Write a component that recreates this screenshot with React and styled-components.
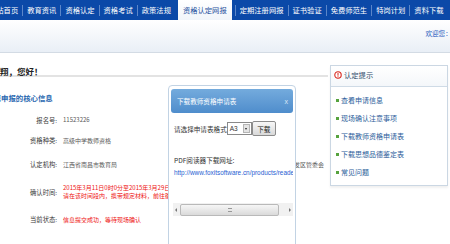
import styled, { createGlobalStyle } from "styled-components";

const GlobalStyle = createGlobalStyle`
  html, body {
    margin: 0;
    padding: 0;
    overflow: hidden;
    background: #fff;
  }
  body {
    font-family: "Noto Sans CJK SC", "Liberation Sans", sans-serif;
  }
`;

const navItems = [
  "网站首页",
  "教育资讯",
  "资格认定",
  "资格考试",
  "政策法规",
  "资格认定网报",
  "定期注册网报",
  "证书验证",
  "免费师范生",
  "特岗计划",
  "资料下载",
];

const tips = [
  "查看申请信息",
  "现场确认注意事项",
  "下载教师资格申请表",
  "下载思想品德鉴定表",
  "常见问题",
];

function App() {
  return (
    <>
      <GlobalStyle />
      <Page>
        <Nav>
          {navItems.map((item) => (
            <NavItem key={item} $active={item === "资格认定网报"}>
              {item}
            </NavItem>
          ))}
        </Nav>
        <Band>
          <Welcome>欢迎您：李翔</Welcome>
        </Band>
        <Main>
          <LeftColumn>
            <Greeting>李翔，您好！</Greeting>
            <SectionTitle>您申报的核心信息</SectionTitle>
            <InfoList>
              <InfoRow $h={20}>
                <Label>报名号:</Label>
                <Value>11523226</Value>
              </InfoRow>
              <InfoRow $h={21}>
                <Label>资格种类:</Label>
                <Value>高级中学教师资格</Value>
              </InfoRow>
              <InfoRow $h={27}>
                <Label>认定机构:</Label>
                <Value>江西省南昌市教育局</Value>
                <Extra>确认点: 南昌高新开发区管委会</Extra>
              </InfoRow>
              <InfoRow $h={28}>
                <Label>确认时间:</Label>
                <Value $red>
                  <Line>2015年3月11日0时0分至2015年3月29日24时0分</Line>
                  <Line>请在该时间段内，携带规定材料，前往确认点</Line>
                </Value>
              </InfoRow>
              <InfoRow $h={27}>
                <Label>当前状态:</Label>
                <Value $red>信息提交成功，等待现场确认</Value>
              </InfoRow>
            </InfoList>
          </LeftColumn>
          <Sidebar>
            <SidebarHeader>
              <svg width="8" height="8" viewBox="0 0 8 8">
                <circle cx="4" cy="4" r="3.2" fill="#fff" stroke="#d9261c" strokeWidth="1.1" />
                <rect x="3.5" y="1.9" width="1" height="2.8" fill="#d9261c" />
                <rect x="3.5" y="5.3" width="1" height="0.9" fill="#d9261c" />
              </svg>
              认定提示
            </SidebarHeader>
            <TipList>
              {tips.map((t) => (
                <Tip key={t}>
                  <Bullet />
                  {t}
                </Tip>
              ))}
            </TipList>
          </Sidebar>
        </Main>

        <Dialog>
          <TitleBar>
            <span>下载教师资格申请表</span>
            <Close>x</Close>
          </TitleBar>
          <DialogBody>
            <FormRow>
              <span>请选择申请表格式</span>
              <Select>
                <span>A3</span>
                <SelectArrow />
              </Select>
              <Button>下载</Button>
            </FormRow>
            <PdfLabel>PDF阅读器下载网址:</PdfLabel>
            <Link>http://www.foxitsoftware.cn/products/reader/</Link>
            <ScrollBar>
              <ArrowLeft />
              <Thumb>
                <Grip />
              </Thumb>
              <ArrowRight />
            </ScrollBar>
          </DialogBody>
        </Dialog>
      </Page>
    </>
  );
}

export default App;

const Page = styled.div`
  position: relative;
  width: 465px;
  height: 244px;
  margin-left: -15px;
  overflow: hidden;
`;

const Nav = styled.div`
  display: flex;
  align-items: center;
  height: 20px;
  background: #0b49a8;
  font-size: 7.3px;
  color: #fff;
  white-space: nowrap;
`;

const NavItem = styled.div`
  line-height: 11px;
  padding: 0 4px;
  border-left: 1px solid #5b86c9;

  &:first-child {
    border-left: none;
  }

  ${(p) =>
    p.$active &&
    `
    align-self: flex-end;
    height: 20px;
    line-height: 20px;
    margin: 0 3px 0 3px;
    padding: 0 5px;
    border-left: none;
    background: linear-gradient(#ffffff, #f1f5fa);
    color: #1d4f9c;
    & + div { border-left: 1px solid #5b86c9; }
  `}
`;

const Band = styled.div`
  display: flex;
  justify-content: flex-end;
  height: 33px;
  padding-top: 8px;
  box-sizing: border-box;
  background: linear-gradient(#ffffff, #e9eff6);
  border-bottom: 1px solid #d3dbe4;
`;

const Welcome = styled.div`
  margin-right: -15px;
  line-height: 10px;
  font-size: 6.6px;
  color: #2f62c0;
  white-space: nowrap;
`;

const Main = styled.div`
  display: flex;
  align-items: flex-start;
`;

const LeftColumn = styled.div`
  flex: 1;
  min-width: 0;
`;

const Greeting = styled.div`
  height: 24px;
  padding: 12px 0 0 6.5px;
  box-sizing: border-box;
  line-height: 12px;
  font-size: 8.5px;
  font-weight: bold;
  color: #222;
  border-bottom: 2px solid #e3e3e3;
`;

const SectionTitle = styled.div`
  margin-top: 16px;
  padding-left: 8.6px;
  line-height: 10px;
  font-size: 7.4px;
  font-weight: bold;
  color: #2a68b0;
`;

const InfoList = styled.div`
  margin-top: 7px;
`;

const InfoRow = styled.div`
  display: flex;
  align-items: center;
  height: ${(p) => p.$h}px;
  white-space: nowrap;
`;

const Label = styled.div`
  flex-shrink: 0;
  width: 72px;
  text-align: right;
  font-size: 6.3px;
  color: #3a3a3a;
`;

const Value = styled.div`
  margin-left: 6px;
  font-size: 6px;
  line-height: 8px;
  color: ${(p) => (p.$red ? "#ee1111" : "#5a5a5a")};
`;

const Line = styled.div``;

const Extra = styled.div`
  margin-left: auto;
  margin-right: 4px;
  font-size: 6px;
  color: #5a5a5a;
`;

const Sidebar = styled.div`
  flex-shrink: 0;
  width: 116px;
  margin: 12px 2px 0 2px;
  border: 1px solid #cbd7e3;
  background: #fff;
  box-shadow: 0 2px 2px rgba(0, 0, 0, 0.06);
`;

const SidebarHeader = styled.div`
  display: flex;
  align-items: center;
  gap: 2px;
  height: 21px;
  padding: 0 3px 2px;
  box-sizing: border-box;
  font-size: 7.3px;
  color: #2f4a6a;
  background: linear-gradient(#ffffff, #f4f7fa);
  border-bottom: 1px solid #cfdbe6;
`;

const TipList = styled.div`
  padding: 4px 0 4px 5px;
`;

const Tip = styled.div`
  display: flex;
  align-items: center;
  gap: 2px;
  height: 18px;
  font-size: 7px;
  color: #2b5d9a;
  white-space: nowrap;
`;

const Bullet = styled.span`
  width: 3px;
  height: 3px;
  background: #56a33e;
`;

const Dialog = styled.div`
  position: absolute;
  left: 183px;
  top: 85px;
  width: 128px;
  height: 180px;
  box-sizing: border-box;
  padding: 3px 2px;
  background: #fff;
  border: 1px solid #c2d3e4;
  border-radius: 4px;
  font-size: 6.6px;
  color: #333;
`;

const TitleBar = styled.div`
  display: flex;
  align-items: center;
  justify-content: space-between;
  height: 24px;
  padding: 0 5px 0 6px;
  border-radius: 3px;
  background: linear-gradient(#74abdd, #4f8dcc);
  color: #fff;
`;

const Close = styled.span`
  color: #d7e6f5;
  font-family: "Liberation Sans", sans-serif;
  font-size: 7px;
`;

const DialogBody = styled.div`
  padding: 0 0 0 3px;
  overflow: hidden;
`;

const FormRow = styled.div`
  display: flex;
  align-items: center;
  height: 15px;
  margin-top: 8px;
  white-space: nowrap;
`;

const Select = styled.div`
  display: flex;
  align-items: center;
  justify-content: space-between;
  width: 25px;
  height: 13px;
  box-sizing: border-box;
  padding: 0 1px 0 2px;
  border: 1px solid #8a8a8a;
  background: #fff;
  font-family: "Liberation Sans", sans-serif;
  font-size: 6.5px;
`;

const SelectArrow = styled.span`
  position: relative;
  width: 7px;
  height: 9px;
  background: #e4e4e4;
  border: 1px solid #b5b5b5;
  box-sizing: border-box;

  &::after {
    content: "";
    position: absolute;
    left: 1px;
    top: 3px;
    border-left: 1.5px solid transparent;
    border-right: 1.5px solid transparent;
    border-top: 2px solid #222;
  }
`;

const Button = styled.div`
  display: flex;
  align-items: center;
  justify-content: center;
  width: 24px;
  height: 15px;
  box-sizing: border-box;
  border: 1px solid #8c8c8c;
  border-radius: 2px;
  background: linear-gradient(#f7f7f7, #d9d9d9);
  color: #222;
`;

const PdfLabel = styled.div`
  margin-top: 19px;
  line-height: 10px;
  white-space: nowrap;
`;

const Link = styled.div`
  margin-top: 3px;
  line-height: 10px;
  font-family: "Liberation Sans", sans-serif;
  font-size: 6.4px;
  color: #1f5ed2;
  white-space: nowrap;
`;

const ScrollBar = styled.div`
  display: flex;
  align-items: center;
  width: 121px;
  height: 13px;
  margin: 25px 0 0 -1px;
  padding: 0 2px;
  box-sizing: border-box;
  background: #f1f1f1;
`;

const ArrowLeft = styled.span`
  width: 0;
  height: 0;
  margin-right: 3px;
  border-top: 2px solid transparent;
  border-bottom: 2px solid transparent;
  border-right: 2px solid #777;
`;

const ArrowRight = styled.span`
  width: 0;
  height: 0;
  margin-left: auto;
  margin-right: 1px;
  border-top: 2px solid transparent;
  border-bottom: 2px solid transparent;
  border-left: 2px solid #777;
`;

const Thumb = styled.div`
  display: flex;
  align-items: center;
  justify-content: center;
  width: 99px;
  height: 12px;
  box-sizing: border-box;
  border: 1px solid #b9b9b9;
  border-radius: 2px;
  background: linear-gradient(#f6f6f6, #dadada);
`;

const Grip = styled.span`
  width: 4px;
  height: 4px;
  border-top: 1px solid #999;
  border-bottom: 1px solid #999;
  box-sizing: border-box;
  background: linear-gradient(transparent 40%, #999 40%, #999 60%, transparent 60%);
`;
